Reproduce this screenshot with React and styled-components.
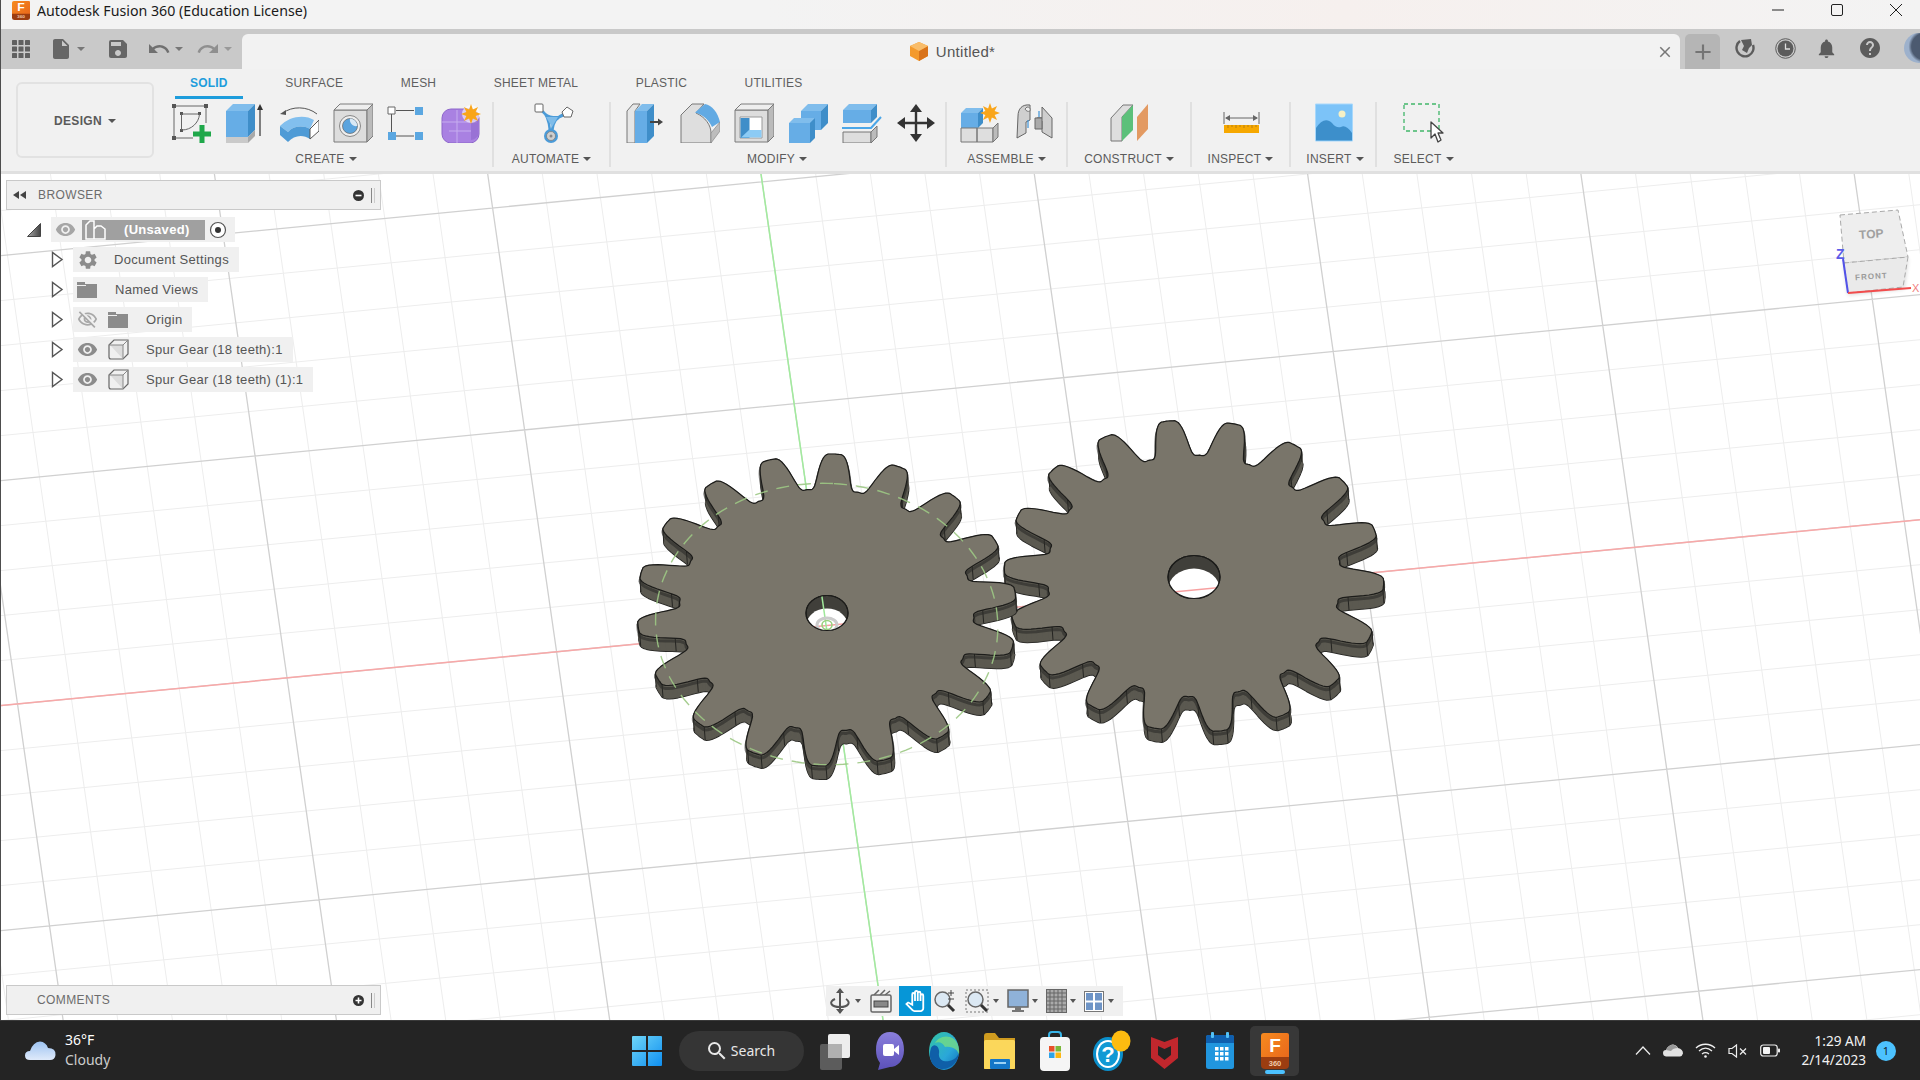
import React from "react";
import styled, { createGlobalStyle } from "styled-components";
import {
  MdInsertDriveFile, MdSave, MdUndo, MdRedo, MdNotifications, MdHelp, MdSettings,
  MdVisibility, MdOutlineVisibilityOff, MdAdd, MdClose, MdOutlinePanTool, MdSearch,
} from "react-icons/md";

const GlobalStyle = createGlobalStyle`
  html, body { margin: 0; padding: 0; width: 1920px; height: 1080px; overflow: hidden; background: #fff; }
  * { box-sizing: border-box; }
  #root { width: 1920px; height: 1080px; font-family: "Liberation Sans", Arial, sans-serif; }
`;

const Page = styled.div`
  display: flex;
  flex-direction: column;
  width: 1920px;
  height: 1080px;
`;
const Window = styled.div`
  flex: 1;
  display: flex;
  flex-direction: column;
  border-left: 1px solid #4d4d4d;
  min-height: 0;
`;

/* title bar */
const TitleBar = styled.div`
  height: 29px;
  display: flex;
  align-items: center;
  padding: 0 18px 9px 11px;
  background: linear-gradient(90deg, #f3f3f3 0%, #f3f3f3 40%, #f6f0ee 70%, #f3f3f3 100%);
`;
const TitleText = styled.span`
  margin-left: 7px;
  font: 14.2px "Noto Sans", sans-serif;
  color: #1a1a1a;
`;
const WinControls = styled.div`
  margin-left: auto;
  display: flex;
  gap: 47px;
  align-items: center;
`;

/* quick access row */
const QatRow = styled.div`
  height: 40px;
  display: flex;
  background: #c9c9c9;
  overflow: hidden;
`;
const QatLeft = styled.div`
  flex: none;
  width: 241px;
  display: flex;
  align-items: center;
  padding: 0 0 0 11px;
`;
const QatSlot = styled.div`
  display: flex;
  margin-left: ${(p) => p.$ml || 0}px;
  color: ${(p) => p.$color || "#666"};
`;
const DocTab = styled.div`
  flex: none;
  width: 1438px;
  height: 35px;
  margin-top: 5px;
  background: #f2f2f2;
  border-radius: 6px 6px 0 0;
  display: grid;
  grid-template-columns: 1fr auto 1fr;
  align-items: center;
  padding: 0 6px 0 0;
`;
const DocTitle = styled.div`
  grid-column: 2;
  display: flex;
  align-items: center;
  gap: 8px;
  margin-right: 11px;
  font-size: 15px;
  letter-spacing: 0.3px;
  color: #555;
`;
const DocClose = styled.div`
  grid-column: 3;
  justify-self: end;
  display: flex;
  color: #777;
`;
const PlusTab = styled.div`
  flex: none;
  width: 35px;
  height: 35px;
  margin: 5px 0 0 5px;
  background: #b5b5b5;
  border-radius: 5px 5px 0 0;
  display: flex;
  align-items: center;
  justify-content: center;
  color: #747474;
`;
const TopIcons = styled.div`
  flex: none;
  display: flex;
  align-items: center;
  gap: 19.5px;
  padding: 0 0 2px 15px;
  color: #5c5c5c;
`;
const Avatar = styled.div`
  flex: none;
  width: 30px;
  height: 30px;
  margin-left: 3px;
  border-radius: 50%;
  background: radial-gradient(circle at 70% 45%, #4c5a70 0 50%, #9db1cc 62%);
`;
const Caret = styled.span`
  display: inline-block;
  width: 0;
  height: 0;
  margin-left: ${(p) => p.$ml ?? 4}px;
  border-left: ${(p) => p.$s || 3.5}px solid transparent;
  border-right: ${(p) => p.$s || 3.5}px solid transparent;
  border-top: ${(p) => (p.$s || 3.5) + 0.5}px solid ${(p) => p.$color || "#555"};
`;
const QatCaret = styled(Caret)`
  align-self: center;
`;

/* ribbon */
const Ribbon = styled.div`
  height: 105px;
  display: flex;
  padding-left: 15px;
  background: #f1f1f1;
  border-bottom: 3px solid #e0e0e0;
`;
const DesignButton = styled.div`
  width: 138px;
  height: 76px;
  margin-top: 13px;
  padding-top: 1px;
  border: 2px solid #e2e2e2;
  border-radius: 6px;
  display: flex;
  align-items: center;
  justify-content: center;
  font-size: 12px;
  font-weight: 700;
  letter-spacing: 0.3px;
  color: #5a5a5a;
`;
const RibbonMain = styled.div`
  margin-left: 9px;
  display: flex;
  flex-direction: column;
`;
const Tabs = styled.div`
  display: flex;
  gap: 27.5px;
  height: 30px;
  padding-left: 12px;
`;
const Tab = styled.div`
  padding: 0 15px;
  height: 30px;
  line-height: 28px;
  font-size: 12px;
  letter-spacing: 0.2px;
  white-space: nowrap;
  font-weight: ${(p) => (p.$active ? 700 : 400)};
  color: ${(p) => (p.$active ? "#1e9ddc" : "#5f5f5f")};
  border-bottom: 3px solid ${(p) => (p.$active ? "#1e9ddc" : "transparent")};
`;
const Groups = styled.div`
  display: flex;
  margin-top: 3px;
`;
const Group = styled.div`
  width: ${(p) => p.$w}px;
  height: 65px;
  padding-top: 1px;
  display: flex;
  flex-direction: column;
  align-items: center;
  border-right: ${(p) => (p.$last ? "none" : "2px solid #e0e0e0")};
`;
const ToolRow = styled.div`
  display: flex;
  gap: ${(p) => p.$gap ?? 14}px;
  height: 40px;
  margin-left: ${(p) => p.$ml || 0}px;
`;
const GroupLabel = styled.div`
  margin-top: 8px;
  margin-left: ${(p) => p.$ml || 0}px;
  line-height: 16px;
  font-size: 12px;
  letter-spacing: 0.25px;
  color: #5b5b5b;
  display: flex;
  align-items: center;
`;

/* viewport */
const Viewport = styled.div`
  position: relative;
  flex: 1;
  background: #fff;
  overflow: hidden;
`;
const SceneSvg = styled.svg`
  position: absolute;
  inset: 0;
`;
const ViewCubeSvg = styled.svg`
  position: absolute;
  left: 1829px;
  top: 30px;
`;
const PanelBar = styled.div`
  width: 375px;
  height: 30px;
  display: flex;
  align-items: center;
  padding: 0 5px 0 6px;
  background: #f0f0f0;
  border: 1px solid #c9c9c9;
  font-size: 12px;
  letter-spacing: 0.4px;
  color: #6c6c6c;
`;
const BrowserPanel = styled.div`
  position: absolute;
  left: 5px;
  top: 6px;
`;
const CommentsPanel = styled.div`
  position: absolute;
  left: 5px;
  bottom: 5px;
`;
const BarTitle = styled.span`
  margin-left: ${(p) => p.$ml}px;
  flex: 1;
`;
const Grip = styled.span`
  width: 4px;
  height: 15px;
  margin-left: 7px;
  border-left: 1px solid #888;
  border-right: 1px solid #ccc;
`;
const Tree = styled.div`
  display: flex;
  flex-direction: column;
  gap: 5px;
  margin-top: 7px;
`;
const TreeRow = styled.div`
  display: flex;
  align-items: center;
  height: 25px;
  padding-left: ${(p) => p.$indent}px;
`;
const TreeItem = styled.div`
  display: flex;
  align-items: center;
  height: 25px;
  margin-left: ${(p) => p.$ml}px;
  padding: 0 ${(p) => p.$pr ?? 10}px 0 4px;
  background: #f0f0f0;
  font-size: 13px;
  letter-spacing: 0.3px;
  color: #555;
  white-space: nowrap;
`;
const TreeLabel = styled.span`
  margin-left: ${(p) => p.$ml ?? 18}px;
`;
const IconGap = styled.span`
  display: flex;
  margin-left: ${(p) => p.$ml ?? 0}px;
  color: ${(p) => p.$color || "#8c8c8c"};
`;
const SelectedName = styled.div`
  display: flex;
  align-items: center;
  width: 123px;
  height: 20px;
  margin-left: 6px;
  padding-left: 3px;
  background: #a0a0a0;
  color: #fff;
  font-weight: 700;
  font-size: 13px;
`;
const NavBar = styled.div`
  position: absolute;
  left: 825px;
  bottom: 4px;
  width: 297px;
  height: 30px;
  background: #f0f0f0;
  display: flex;
  align-items: center;
  padding-left: 3px;
`;
const NavSlot = styled.div`
  display: flex;
  align-items: center;
  justify-content: center;
  height: 30px;
  width: ${(p) => p.$w || 26}px;
  margin-left: ${(p) => p.$ml || 0}px;
  background: ${(p) => (p.$active ? "#0696d7" : "transparent")};
  color: ${(p) => (p.$active ? "#fff" : "#555")};
`;

/* taskbar */
const Taskbar = styled.div`
  height: 60px;
  display: grid;
  grid-template-columns: 1fr auto 1fr;
  align-items: center;
  background: #242424;
  border-top: 1px solid #3a3a3a;
  color: #fff;
  font-family: "Noto Sans", sans-serif;
`;
const Weather = styled.div`
  display: flex;
  align-items: center;
  gap: 9px;
  padding-left: 25px;
`;
const WeatherText = styled.div`
  display: flex;
  flex-direction: column;
  font-size: 14px;
  line-height: 20px;
  margin-top: -1px;
  color: #fff;
  & > span:last-child { color: #ccc; }
`;
const TaskCenter = styled.div`
  display: flex;
  align-items: center;
  padding-left: 3px;
`;
const TaskIcon = styled.div`
  position: relative;
  width: ${(p) => p.$w || 55}px;
  height: 50px;
  margin-left: ${(p) => p.$ml || 0}px;
  display: flex;
  align-items: center;
  justify-content: center;
  border-radius: 5px;
  background: ${(p) => (p.$active ? "#383838" : "transparent")};
`;
const ActiveDot = styled.span`
  position: absolute;
  left: 15px;
  bottom: 2px;
  width: 20px;
  height: 4px;
  border-radius: 2px;
  background: #4cc2ff;
`;
const SearchPill = styled.div`
  width: 125px;
  height: 40px;
  margin: 0 3px 0 9px;
  border-radius: 20px;
  background: #353535;
  display: flex;
  align-items: center;
  justify-content: center;
  gap: 2px;
  padding-right: 3px;
  font-size: 14px;
  color: #e8e8e8;
`;
const Tray = styled.div`
  display: flex;
  align-items: center;
  justify-content: flex-end;
  padding-right: 24px;
`;
const TrayIcons = styled.div`
  display: flex;
  align-items: center;
  gap: 12px;
  margin-right: 21px;
`;
const Clock = styled.div`
  display: flex;
  flex-direction: column;
  align-items: flex-end;
  margin-top: -2px;
  font-size: 13.6px;
  line-height: 19px;
  color: #f2f2f2;
`;
const Badge = styled.div`
  width: 20px;
  height: 20px;
  margin-left: 10px;
  border-radius: 50%;
  background: #4cc2ff;
  color: #10202a;
  font-size: 11px;
  text-align: center;
  line-height: 20px;
`;

/* ---- gears ---- */
const PROFILE = [[0, 1], [2.2, 0.998], [3.2, 0.982], [4.2, 0.945], [5.2, 0.89], [6.1, 0.835], [6.9, 0.797], [7.8, 0.776], [8.6, 0.772], [10, 0.775]];
const profileAt = (d) => {
  for (let i = 1; i < PROFILE.length; i++) {
    if (d <= PROFILE[i][0]) {
      const [d0, r0] = PROFILE[i - 1];
      const [d1, r1] = PROFILE[i];
      return r0 + ((r1 - r0) * (d - d0)) / (d1 - d0);
    }
  }
  return 0.775;
};
const project = (g, r, deg) => {
  const t = (deg * Math.PI) / 180;
  return [
    g.cx + r * (g.ax * Math.cos(t) + g.bx * Math.sin(t)),
    g.cy + r * (g.ay * Math.cos(t) + g.by * Math.sin(t)),
  ];
};
const toPath = (pts, dx = 0, dy = 0) =>
  "M" + pts.map((p) => `${(p[0] + dx).toFixed(1)} ${(p[1] + dy).toFixed(1)}`).join("L") + "Z";

const gearOutline = (g) => {
  const pts = [];
  for (let i = 0; i < 18; i++) {
    for (let d = -10; d < 10; d += 0.5) {
      pts.push(project(g, profileAt(Math.abs(d)), i * 20 + d));
    }
  }
  return pts;
};
const THICK = [1, 13];
const RED_AXIS = { x1: 0, y1: 705.6, x2: 1920, y2: 519.6 };
const GREEN_AXIS = { x1: 760, y1: 174, x2: 882, y2: 1020 };

function Gear({ g, id }) {
  const pts = gearOutline(g);
  const sides = pts
    .map((p, i) => {
      const q = pts[(i + 1) % pts.length];
      return toPath([p, q, [q[0] + THICK[0], q[1] + THICK[1]], [p[0] + THICK[0], p[1] + THICK[1]]]);
    })
    .join("");
  const edges = [];
  for (let i = 0; i < 18; i++) {
    [-6.4, -2.2, 2.2, 6.4].forEach((d) => {
      const p = project(g, profileAt(Math.abs(d)), i * 20 + d);
      edges.push(`M${p[0].toFixed(1)} ${p[1].toFixed(1)}l${THICK[0]} ${THICK[1]}`);
    });
  }
  const h = g.hole;
  return (
    <g>
      <path d={toPath(pts, THICK[0], THICK[1])} fill="#57554e" stroke="#1e1e1c" strokeWidth="2" strokeLinejoin="round" />
      <path d={sides} fill="#5b5950" stroke="#5b5950" strokeWidth="0.5" />
      <path d={edges.join("")} stroke="#1e1e1c" strokeWidth="0.9" fill="none" />
      <path d={toPath(pts, 0, 3)} fill="none" stroke="#2c2b28" strokeWidth="3" opacity="0.6" />
      <path d={toPath(pts)} fill="#79756a" stroke="#1c1c1a" strokeWidth="1.2" strokeLinejoin="round" />
      <clipPath id={id}>
        <ellipse cx={h.x} cy={h.y} rx={h.rx} ry={h.ry} />
      </clipPath>
      <ellipse cx={h.x} cy={h.y} rx={h.rx} ry={h.ry} fill="#403f3a" stroke="#1c1c1a" strokeWidth="1.2" />
      <g clipPath={`url(#${id})`}>
        <ellipse cx={h.x} cy={h.y + 13} rx={h.rx} ry={h.ry} fill="#fff" />
        <line {...RED_AXIS} stroke="#f7a0a0" strokeWidth="1.5" />
        {g.origin && (
          <>
            <line {...GREEN_AXIS} stroke="#9fe89a" strokeWidth="1.5" />
            <ellipse cx="826" cy="625" rx="10" ry="7" fill="none" stroke="#ccc" strokeWidth="3" />
            <ellipse cx="826" cy="625" rx="5" ry="4.5" fill="none" stroke="#9bd07f" strokeWidth="1.6" />
          </>
        )}
      </g>
      <ellipse cx={h.x} cy={h.y} rx={h.rx} ry={h.ry} fill="none" stroke="#1c1c1a" strokeWidth="1.2" />
    </g>
  );
}

const GEAR_A = { cx: 825.7, cy: 610, ax: 8, ay: -156, bx: 190, by: 10, hole: { x: 826, y: 613, rx: 21, ry: 17.5 }, origin: true };
const GEAR_B = { cx: 1193, cy: 576, ax: -26, ay: -155, bx: 188, by: -19, hole: { x: 1193, y: 577, rx: 26, ry: 21.5 } };

function Scene() {
  const minor = [];
  const major = [];
  for (let k = -20; k <= 30; k++) {
    const x0 = 760 + 54.66 * k;
    const d = `M${x0} 174L${x0 + 122} 1020`;
    (k % 5 === 0 ? major : minor).push(d);
  }
  for (let k = -20; k <= 20; k++) {
    const y0 = 705.6 + 45 * k;
    const d = `M0 ${y0}L1920 ${y0 - 186}`;
    (k % 5 === 0 ? major : minor).push(d);
  }
  const pitch = [];
  for (let a = 0; a < 360; a += 2) pitch.push(project(GEAR_A, 0.9, a));
  return (
    <SceneSvg width="1920" height="846" viewBox="0 174 1920 846">
      <path d={minor.join("")} stroke="#ededed" strokeWidth="1" fill="none" />
      <path d={major.join("")} stroke="#d0d0d0" strokeWidth="1.3" fill="none" />
      <line {...RED_AXIS} stroke="#f8a8a8" strokeWidth="1.5" />
      <line {...GREEN_AXIS} stroke="#a2eb9e" strokeWidth="1.5" />
      <Gear g={GEAR_B} id="holeB" />
      <Gear g={GEAR_A} id="holeA" />
      <path d={toPath(pitch, 0, 14)} fill="none" stroke="#9cc884" strokeWidth="1.4" strokeDasharray="13 9" opacity="0.9" />
    </SceneSvg>
  );
}

function ViewCube() {
  return (
    <ViewCubeSvg width="91" height="100" viewBox="1829 204 91 100">
      <defs>
        <filter id="cubeShadow" x="-20%" y="-20%" width="140%" height="140%">
          <feGaussianBlur stdDeviation="2" />
        </filter>
      </defs>
      <path d="M1843 264L1907 258L1903 289L1847 295Z" fill="#000" opacity="0.16" filter="url(#cubeShadow)" />
      <path d="M1839 215L1897 210L1907 257L1843 263Z" fill="#eeeeee" stroke="#aaa" strokeDasharray="5 3" />
      <path d="M1843 263L1907 257L1902 287L1847 293Z" fill="#eaeaea" stroke="#aaa" strokeDasharray="5 3" />
      <text x="1858" y="238" fontFamily="Liberation Sans" fontSize="12" fontWeight="700" fill="#a0a0a0" transform="rotate(-4 1872 234)">TOP</text>
      <text x="1854" y="279" fontFamily="Liberation Sans" fontSize="8" fontWeight="700" letterSpacing="1" fill="#9a9a9a" transform="rotate(-4 1872 275)">FRONT</text>
      <line x1="1842" y1="259" x2="1847" y2="293" stroke="#5252e8" strokeWidth="2" />
      <line x1="1847" y1="293" x2="1910" y2="288" stroke="#f24c4c" strokeWidth="2" />
      <text x="1835" y="259" fontFamily="Liberation Sans" fontSize="14" fontWeight="700" fill="#5c5ce8">Z</text>
      <text x="1911" y="292" fontFamily="Liberation Sans" fontSize="11" fill="#f08080">X</text>
    </ViewCubeSvg>
  );
}

/* ---- ribbon icons ---- */
const Ico = ({ children, w = 40, h = 40 }) => (
  <svg width={w} height={h} viewBox={`0 0 ${w} ${h}`} strokeLinejoin="round">{children}</svg>
);
const Star = ({ x, y, r = 10 }) => {
  const pts = [];
  for (let i = 0; i < 16; i++) {
    const rr = i % 2 ? r * 0.5 : r;
    const a = (i * Math.PI) / 8;
    pts.push(`${(x + rr * Math.cos(a)).toFixed(1)},${(y + rr * Math.sin(a)).toFixed(1)}`);
  }
  return <polygon points={pts.join(" ")} fill="#f9a51a" />;
};
const Cube = ({ x, y, w, h, d, f, t, s, st = "none" }) => (
  <g stroke={st} strokeWidth="1">
    <rect x={x} y={y} width={w} height={h} fill={f} />
    <path d={`M${x} ${y}l${d} ${-d}h${w}l${-d} ${d}Z`} fill={t} />
    <path d={`M${x + w} ${y}l${d} ${-d}v${h}l${-d} ${d}Z`} fill={s} />
  </g>
);
const BLUE = { f: "#66ade6", t: "#80bdec", s: "#3f8ec9" };
const GREY = { f: "#dddddd", t: "#eeeeee", s: "#bbbbbb", st: "#7a7a7a" };

const SketchIcon = () => (
  <Ico>
    <path d="M3 3H35M3 3V35M3 35H22M35 3V20" stroke="#666" fill="none" />
    <path d="M1 1h4v4h-4zM33 1h4v4h-4zM1 33h4v4h-4zM9 9h3v3h-3zM27 9h3v3h-3zM9 26h3v3h-3z" fill="#555" />
    <path d="M11 11H28M10.5 11V27M28.5 11C28 20 20 27 11 27" stroke="#666" fill="none" />
    <path d="M28.5 22h5v6.500h6.500v5h-6.500v6.500h-5v-6.500h-6.500v-5h6.500z" fill="#1fa84a" />
  </Ico>
);
const ExtrudeIcon = () => (
  <Ico>
    <Cube x={1} y={8} w={22} h={26} d={7} {...BLUE} />
    <rect x="1" y="34" width="22" height="6" fill="#cacaca" />
    <path d="M23 34l7-7v6l-7 7z" fill="#a9a9a9" />
    <path d="M35 33V5" stroke="#333" strokeWidth="1.2" />
    <path d="M35 1l-3 6h6z" fill="#333" />
  </Ico>
);
const RevolveIcon = () => (
  <Ico>
    <path d="M4 10C13 3 28 3 38 11" stroke="#555" fill="none" />
    <path d="M1 11l6-4v5z" fill="#555" />
    <path d="M1 23C10 13 26 11 35 17L31 26C24 22 14 23 9 29Z" fill="#82bfee" />
    <path d="M1 23L9 29C14 23 24 22 31 26V36C24 31 15 32 9 39L1 32Z" fill="#4f9bd6" />
    <path d="M31 26L40 17V28L31 36Z" fill="#fff" stroke="#555" />
  </Ico>
);
const HoleIcon = () => (
  <Ico>
    <Cube x={1} y={7} w={33} h={32} d={6} {...GREY} />
    <circle cx="17" cy="23" r="10.500" fill="#eee" stroke="#888" />
    <circle cx="17" cy="23" r="7.500" fill="#5ba4de" stroke="#666" strokeWidth="0.7" />
    <path d="M17 15.600C16 20 20 24 24.300 23C24 19 21 16 17 15.600Z" fill="#d8e8f5" />
  </Ico>
);
const PatternIcon = () => (
  <Ico>
    <path d="M9 7.500H27M4.500 11V29M9 33H27" stroke="#555" fill="none" />
    <rect x="1" y="4" width="7" height="7" fill="#fff" stroke="#666" />
    <rect x="28" y="4" width="8" height="8" fill="#5ba7e1" />
    <rect x="1" y="29" width="8" height="8" fill="#5ba7e1" />
    <rect x="28" y="29" width="8" height="8" fill="#5ba7e1" />
  </Ico>
);
const FormIcon = () => (
  <Ico>
    <rect x="1" y="6" width="37" height="34" rx="9" fill="#a981e2" stroke="#8d66ca" />
    <path d="M1 19H36M16 7V40M8 28H30" stroke="#c6adef" fill="none" />
    <path d="M30 15h7v18c-3 3-5 4-7 4z" fill="#8f69cd" opacity="0.6" />
    <circle cx="30" cy="11" r="9" fill="#fff" opacity="0.6" />
    <Star x={30} y={11} r={10} />
  </Ico>
);
const AutomateIcon = () => (
  <Ico>
    <path d="M7 7C12 10 15 16 16 28M31 11C24 13 19 18 18 28M9 9C14 15 24 16 30 12" stroke="#4b9bd8" strokeWidth="2.600" fill="none" />
    <path d="M12 14L24 14L18 24Z" fill="#7fbce9" />
    <rect x="1" y="1" width="8" height="8" rx="1" fill="#fff" stroke="#666" />
    <path d="M33 4l6 4-2 6h-7l-2-5z" fill="#fff" stroke="#666" />
    <circle cx="17" cy="33" r="7" fill="#4b9bd8" />
    <circle cx="17" cy="33" r="4.500" fill="#cfcfcf" stroke="#777" strokeWidth="0.7" />
    <circle cx="17" cy="33" r="1.500" fill="#888" />
  </Ico>
);
const PressPullIcon = () => (
  <Ico>
    <path d="M1 8L7 1H14L9 8V40H1Z" fill="#e6e6e6" stroke="#777" />
    <Cube x={9} y={8} w={12} h={32} d={7} {...BLUE} />
    <rect x="24" y="18" width="9" height="2" fill="#444" />
    <path d="M32 15.500l5 3.500-5 3.500z" fill="#444" />
  </Ico>
);
const FilletIcon = () => (
  <Ico>
    <path d="M1 12L12 1H24L16 10C25 14 31 22 31 30V40H1Z" fill="#dedede" stroke="#777" />
    <path d="M15 9.500L25 1C32 2 38 10 40 19L32 24C29 17 23 12 15 9.500Z" fill="#62aae3" />
    <path d="M31 30L40 19V28L31 40Z" fill="#bdbdbd" stroke="#888" strokeWidth="0.7" />
  </Ico>
);
const ShellIcon = () => (
  <Ico>
    <Cube x={1} y={7} w={33} h={32} d={6} {...GREY} />
    <rect x="6" y="14" width="22" height="21" fill="#fff" stroke="#999" />
    <rect x="6.500" y="15" width="9" height="20" fill="#3f8ec9" />
    <path d="M15 27H27.500V34.500H7Z" fill="#8ccbf5" />
  </Ico>
);
const CombineIcon = () => (
  <Ico>
    <Cube x={13} y={8} w={20} h={19} d={7} {...BLUE} />
    <Cube x={1} y={20} w={21} h={20} d={5} {...BLUE} />
  </Ico>
);
const SplitIcon = () => (
  <Ico>
    <Cube x={1} y={7} w={28} h={13} d={6} {...BLUE} />
    <path d="M-1 25H29L39 14" stroke="#4ba6e8" strokeWidth="2" fill="none" />
    <path d="M1 29H29V40H1Z" fill="#dedede" stroke="#777" />
    <path d="M29 29L35 23V34L29 40Z" fill="#bbb" stroke="#777" />
  </Ico>
);
const MoveIcon = () => (
  <Ico>
    <path d="M20 6V34M6 20H34" stroke="#333" strokeWidth="2.400" />
    <path d="M20 1l6 8h-12zM20 39l6-8h-12zM1 20l8-6v12zM39 20l-8-6v12z" fill="#333" />
  </Ico>
);
const NewComponentIcon = () => (
  <Ico>
    <Cube x={1} y={10} w={17} h={15} d={5} {...BLUE} />
    <path d="M1 25H17V39H1ZM17 25H33V39H17Z" fill="#dedede" stroke="#777" />
    <path d="M33 25l5-5v14l-5 5z" fill="#bbb" stroke="#777" />
    <Star x={30} y={10} r={10} />
  </Ico>
);
const JointIcon = () => (
  <Ico>
    <path d="M1 35L2 13C2 6 6 1 14 2V17L10 19V30Z" fill="#cfcfcf" stroke="#666" />
    <path d="M11 4C13 4 15 5 14 8C12 9 10 8 9 6Z" fill="#eee" stroke="#777" />
    <path d="M26 4L36 15V35L26 29V18L20 16C20 15 22 14 26 15Z" fill="#cfcfcf" stroke="#666" />
    <rect x="19" y="15" width="7" height="11" fill="#aaa" stroke="#666" />
    <path d="M12 17V25M23 8V14" stroke="#3f93d8" strokeWidth="1.200" />
  </Ico>
);
const ConstructIcon = () => (
  <Ico>
    <path d="M1 15L13 2H23L12 14V38H1Z" fill="#dedede" stroke="#777" />
    <path d="M12 14L23 2V27L12 38Z" fill="#5cc07a" />
    <path d="M27 14L38 1V26L27 38Z" fill="#e39a62" />
  </Ico>
);
const InspectIcon = () => (
  <Ico>
    <path d="M3 9V21M38 9V21M5 15H36" stroke="#666" fill="none" />
    <path d="M4 15l5-3v6zM37 15l-5-3v6z" fill="#666" />
    <rect x="3" y="22" width="35" height="8" fill="#f6a800" />
    <path d="M7 22v3M11 22v2M15 22v3M19 22v2M23 22v3M27 22v2M31 22v3M35 22v2" stroke="#b97f10" fill="none" />
  </Ico>
);
const InsertIcon = () => (
  <Ico>
    <rect x="0.500" y="1" width="37" height="37" fill="#7cc3f8" stroke="#a8d8fb" />
    <circle cx="27" cy="11" r="3.500" fill="#f5f0c5" />
    <path d="M1 37.500V25C6 17 12 15 17 20C20 24 23 25 26 24C29 22 33 24 37 30V37.500Z" fill="#3d8fcb" />
  </Ico>
);
const SelectIcon = () => (
  <Ico w={42} h={42}>
    <rect x="1" y="1" width="35" height="27" fill="none" stroke="#41b66a" strokeWidth="1.300" strokeDasharray="4 3" />
    <path d="M28 19L28 35L32 31L35 39L38 37L35 30L40 30Z" fill="#fff" stroke="#444" strokeWidth="1.300" />
  </Ico>
);

/* ---- tree / small icons ---- */
const FolderIcon = () => (
  <svg width="20" height="16" viewBox="0 0 20 16">
    <path d="M0 0H8V2H20V16H0Z" fill="#8c8c8c" />
    <path d="M0 3H9V4H0Z" fill="#f0f0f0" />
  </svg>
);
const BodyIcon = () => (
  <svg width="21" height="21" viewBox="0 0 21 21">
    <path d="M1 6L6 1H20V15L15 20H3Q1 20 1 18Z" fill="#f0f0f0" stroke="#666" strokeWidth="1.200" />
    <path d="M2 6H15V20" fill="#dcdcdc" stroke="none" />
    <path d="M15 6L20 1M1 6H15V20" stroke="#888" fill="none" />
  </svg>
);
const ExpandArrow = () => (
  <svg width="13" height="17" viewBox="0 0 13 17" style={{ display: "block" }}>
    <path d="M1.500 1.500V15.500L11 8.500Z" fill="#fff" stroke="#555" strokeWidth="1.400" />
  </svg>
);
const RootTriangle = () => (
  <svg width="14" height="14" viewBox="0 0 14 14">
    <defs>
      <linearGradient id="rootTri" x1="0" y1="0" x2="1" y2="0">
        <stop offset="0" stopColor="#aaa" />
        <stop offset="1" stopColor="#444" />
      </linearGradient>
    </defs>
    <path d="M0.500 13.500L13.500 0.500V13.500Z" fill="url(#rootTri)" stroke="#444" />
  </svg>
);
const ComponentMini = () => (
  <svg width="21" height="20" viewBox="0 0 21 20">
    <path d="M1 5L5 1H9V19H1Z M9 9L12 6H16L20 9V19H9Z" fill="#a0a0a0" stroke="#fff" strokeWidth="1.500" />
  </svg>
);
const RadioDot = () => (
  <svg width="18" height="18" viewBox="0 0 18 18">
    <circle cx="9" cy="9" r="7.500" fill="#fff" stroke="#555" strokeWidth="1.200" />
    <circle cx="9" cy="9" r="3" fill="#333" />
  </svg>
);
const RoundGlyph = ({ plus }) => (
  <svg width="11" height="11" viewBox="0 0 11 11">
    <circle cx="5.500" cy="5.500" r="5.500" fill="#333" />
    <path d={plus ? "M2.500 5.500h6M5.500 2.500v6" : "M2.500 5.500h6"} stroke="#fff" strokeWidth="1.600" />
  </svg>
);
const DoubleLeft = () => (
  <svg width="13" height="8" viewBox="0 0 13 8">
    <path d="M0 4l6-4v8zM7 4l6-4v8z" fill="#444" />
  </svg>
);
const AppGrid = () => (
  <svg width="18" height="18" viewBox="0 0 18 18" fill="#606060">
    {[0, 6.500, 13].map((x) => [0, 6.500, 13].map((y) => <rect key={`${x}-${y}`} x={x} y={y} width="5" height="5" rx="0.600" />))}
  </svg>
);
const OrangeCube = () => (
  <svg width="18" height="19" viewBox="0 0 18 19">
    <path d="M9 0L18 4V14L9 19L0 14V4Z" fill="#f49a2c" />
    <path d="M9 9L18 4V14L9 19Z" fill="#d9731a" />
    <path d="M9 0L18 4L9 9L0 4Z" fill="#f9bd6a" />
  </svg>
);
const SyncDial = () => (
  <svg width="20" height="20" viewBox="0 0 20 20" fill="none">
    <path d="M5 3A8.500 8.500 0 1 0 18 7" stroke="#5c5c5c" strokeWidth="2.400" />
    <path d="M6 2L16 1L17 7L14 10L12 15L7 12L9 8Z" fill="#5c5c5c" />
  </svg>
);
const JobClock = () => (
  <svg width="21" height="21" viewBox="0 0 21 21" fill="none">
    <circle cx="10.500" cy="10.500" r="9.800" stroke="#5c5c5c" />
    <circle cx="10.500" cy="10.500" r="8" fill="#5c5c5c" />
    <path d="M10.500 5.500V11H15" stroke="#ddd" strokeWidth="1.300" />
  </svg>
);

/* ---- nav bar icons ---- */
const OrbitIcon = () => (
  <svg width="22" height="26" viewBox="0 0 22 26" fill="none">
    <path d="M11 1V25" stroke="#555" strokeWidth="2" />
    <path d="M11 0l4 5H7zM11 26l-4-5h8z" fill="#555" />
    <path d="M6 11C-1 14 2 19 11 19C20 19 22 14 17 11" stroke="#555" strokeWidth="2" />
  </svg>
);
const LookIcon = () => (
  <svg width="22" height="24" viewBox="0 0 22 24" fill="none">
    <path d="M4 6L9 1M10 6L15 1M15 6L20 2" stroke="#666" strokeWidth="1.500" />
    <rect x="1" y="6" width="20" height="17" rx="1.500" fill="#eee" stroke="#666" strokeWidth="1.500" />
    <rect x="4" y="12" width="14" height="6" fill="#888" stroke="#444" />
  </svg>
);
const ZoomIcon = ({ size = 24, dashed, pm }) => (
  <svg width={size} height={size} viewBox="0 0 24 24" fill="none">
    {dashed && <rect x="1" y="1" width="22" height="22" stroke="#777" strokeDasharray="2 2" />}
    <circle cx="10.500" cy="10.500" r="7.500" fill="#dbe8f3" stroke="#666" strokeWidth="1.500" />
    <path d="M16 16L22 22" stroke="#333" strokeWidth="3" />
    {pm && <path d="M19 1v6M16 4h6M16 10h6" stroke="#444" />}
  </svg>
);
const DisplayIcon = () => (
  <svg width="22" height="24" viewBox="0 0 22 24">
    <rect x="1" y="1" width="20" height="17" fill="#8fb2d9" stroke="#666" strokeWidth="1.500" />
    <path d="M8 18h6v3h3v2H5v-2h3z" fill="#777" />
  </svg>
);
const GridIcon = () => (
  <svg width="21" height="24" viewBox="0 0 21 24">
    <rect x="0.500" y="0.500" width="20" height="23" fill="#aaa" stroke="#666" />
    <path d="M4 0V24M8 0V24M12 0V24M16 0V24M0 4H21M0 8H21M0 12H21M0 16H21M0 20H21" stroke="#666" strokeWidth="1" />
  </svg>
);
const ViewsIcon = () => (
  <svg width="20" height="21" viewBox="0 0 20 21">
    <rect x="0.500" y="0.500" width="19" height="20" fill="#fff" stroke="#777" />
    <rect x="2" y="2" width="7" height="7.500" fill="#6e94c6" />
    <rect x="11" y="2" width="7" height="7.500" fill="#6e94c6" />
    <rect x="2" y="11.500" width="7" height="7.500" fill="#6e94c6" />
    <rect x="11" y="11.500" width="7" height="7.500" fill="#6e94c6" />
  </svg>
);

/* ---- taskbar icons ---- */
const FusionLogo = ({ w, h, big }) => (
  <svg width={w} height={h} viewBox="0 0 28 36" preserveAspectRatio="none">
    <defs>
      <linearGradient id={big ? "fuA" : "fuB"} x1="0" y1="0" x2="1" y2="1">
        <stop offset="0" stopColor="#f68a1f" />
        <stop offset="1" stopColor="#e8641b" />
      </linearGradient>
    </defs>
    <path d="M3 0H26Q28 0 28 2V30L25 33H3Q0 33 0 30V3Q0 0 3 0Z" fill={`url(#${big ? "fuA" : "fuB"})`} />
    <path d="M0 24H28V32Q28 36 24 36H4Q0 36 0 32Z" fill="#9c3d10" />
    <text x="14" y="19" textAnchor="middle" fontFamily="Liberation Sans" fontWeight="700" fontSize="19" fill="#fff">F</text>
    <text x="14" y="33" textAnchor="middle" fontFamily="Liberation Sans" fontWeight="700" fontSize="7.500" fill="#f0c8a8">360</text>
  </svg>
);
const WinLogo = () => (
  <svg width="30" height="30" viewBox="0 0 30 30">
    <defs>
      <linearGradient id="winG" x1="0" y1="0" x2="1" y2="1">
        <stop offset="0" stopColor="#6fd6f8" />
        <stop offset="1" stopColor="#0f8ff0" />
      </linearGradient>
    </defs>
    <path d="M1 0H14V14H0V1Q0 0 1 0ZM16 0H29Q30 0 30 1V14H16ZM0 16H14V30H1Q0 30 0 29ZM16 16H30V29Q30 30 29 30H16Z" fill="url(#winG)" />
  </svg>
);
const TaskView = () => (
  <svg width="30" height="38" viewBox="0 0 30 38">
    <rect x="8" y="2" width="22" height="24" rx="2" fill="#ededed" />
    <rect x="0" y="12" width="22" height="26" rx="2" fill="#5c5c5c" />
    <rect x="8" y="12" width="14" height="14" fill="#b0b0b0" />
  </svg>
);
const ChatIcon = () => (
  <svg width="30" height="40" viewBox="0 0 30 40">
    <defs>
      <linearGradient id="chatG" x1="0" y1="0" x2="0" y2="1">
        <stop offset="0" stopColor="#8a7fdc" />
        <stop offset="1" stopColor="#5b50b8" />
      </linearGradient>
    </defs>
    <path d="M15 1C24 1 29 8 29 19C29 30 22 36 15 36L3 39L5 32C2 28 1 24 1 19C1 8 6 1 15 1Z" fill="url(#chatG)" />
    <rect x="8" y="13" width="11" height="12" rx="2" fill="#fff" />
    <path d="M19 18l5-4v10l-5-4z" fill="#fff" />
  </svg>
);
const EdgeIcon = () => (
  <svg width="31" height="40" viewBox="0 0 31 40">
    <defs>
      <linearGradient id="edgeA" x1="0" y1="0" x2="1" y2="1">
        <stop offset="0" stopColor="#34c6a4" />
        <stop offset="0.6" stopColor="#2aa7d9" />
        <stop offset="1" stopColor="#0d6db8" />
      </linearGradient>
    </defs>
    <ellipse cx="15" cy="20" rx="15" ry="19" fill="url(#edgeA)" />
    <path d="M30 21C30 30 22 39 12 38C2 36-1 26 2 17C5 11 11 16 10 22C9 29 15 31 20 30C26 29 29 25 30 21Z" fill="#0f5fa8" />
    <path d="M16 16C24 15 29 19 30 24C31 16 28 8 21 6C14 4 8 8 6 12C10 10 14 12 16 16Z" fill="#7ee27a" opacity="0.7" />
  </svg>
);
const FolderTask = () => (
  <svg width="31" height="36" viewBox="0 0 31 36">
    <path d="M0 3Q0 0 3 0H11L15 5H31V36H0Z" fill="#cf9b1f" />
    <rect x="0" y="7" width="31" height="29" rx="1.500" fill="#fbd75b" />
    <rect x="6" y="26" width="20" height="10" rx="1" fill="#1476c8" />
    <rect x="10" y="29" width="12" height="2" fill="#9cd2f6" />
  </svg>
);
const StoreIcon = () => (
  <svg width="30" height="40" viewBox="0 0 30 40" fill="none">
    <path d="M9 8V4Q9 1 12 1H18Q21 1 21 4V8" stroke="#37b4e8" strokeWidth="2" />
    <rect x="0" y="6" width="30" height="34" rx="4" fill="#f5f5f5" />
    <rect x="9" y="15" width="5.500" height="5.500" fill="#e8502a" />
    <rect x="15.500" y="15" width="5.500" height="5.500" fill="#7bb83a" />
    <rect x="9" y="21.500" width="5.500" height="5.500" fill="#2ea3e8" />
    <rect x="15.500" y="21.500" width="5.500" height="5.500" fill="#fdb713" />
  </svg>
);
const HelpTask = () => (
  <svg width="42" height="42" viewBox="-4 0 42 42">
    <ellipse cx="15" cy="24" rx="15" ry="17" fill="#0b8fcb" />
    <ellipse cx="15" cy="24" rx="12" ry="14" fill="#fff" />
    <ellipse cx="15" cy="24" rx="10" ry="12" fill="#1199d4" />
    <text x="15" y="32" textAnchor="middle" fontFamily="Liberation Sans" fontWeight="700" fontSize="22" fill="#fff">?</text>
    <ellipse cx="28" cy="11" rx="9.500" ry="10.500" fill="#fdbb10" />
  </svg>
);
const McAfeeIcon = () => (
  <svg width="27" height="36" viewBox="0 0 27 36">
    <path d="M0 4L13.500 9L27 4V25L13.500 36L0 25Z" fill="#c1272d" />
    <path d="M7 13L13.500 16L20 13V22L13.500 27L7 22Z" fill="#242424" />
  </svg>
);
const CalendarIcon = () => (
  <svg width="28" height="37" viewBox="0 0 28 37">
    <rect x="0" y="3" width="28" height="34" rx="2.500" fill="#2196de" />
    <path d="M0 5Q0 3 2 3H26Q28 3 28 5V11H0Z" fill="#0f5fae" />
    <rect x="5" y="0" width="3" height="6" rx="1" fill="#53c0f5" />
    <rect x="20" y="0" width="3" height="6" rx="1" fill="#53c0f5" />
    {[9, 14, 19].map((x) => [15, 20, 25].map((y) => <rect key={`${x}-${y}`} x={x} y={y} width="3.500" height="3.500" fill="#fff" />))}
  </svg>
);
const WeatherCloud = () => (
  <svg width="31" height="20" viewBox="0 0 31 20">
    <defs>
      <linearGradient id="cloudG" x1="0" y1="0" x2="0" y2="1">
        <stop offset="0" stopColor="#9dc3f2" />
        <stop offset="1" stopColor="#dfeafa" />
      </linearGradient>
    </defs>
    <path d="M5 19Q0 19 0 14.500Q0 10 5 10Q8 1 15 0.500Q21 1 23 7Q31 7 30.500 14Q30 19 25 19Z" fill="url(#cloudG)" />
  </svg>
);
const Chevron = () => (
  <svg width="16" height="9" viewBox="0 0 16 9"><path d="M1 8.500L8 1L15 8.500" stroke="#eee" fill="none" strokeWidth="1.200" /></svg>
);
const OneDrive = () => (
  <svg width="20" height="13" viewBox="0 0 20 13">
    <path d="M3 12.500Q0 12 0 9Q0 6 3 6Q5 1 10 0.500Q14 1 15 4Q20 5 20 9.500Q19 12.500 17 12.500Z" fill="#e2e2e2" />
    <path d="M3 6Q5 1 10 0.500Q13 1 15 4Q10 4 8 7Z" fill="#9a9a9a" />
  </svg>
);
const Wifi = () => (
  <svg width="21" height="15" viewBox="0 0 21 15" fill="none" stroke="#f0f0f0" strokeWidth="1.300">
    <path d="M1 5C6 0 15 0 20 5M4 8C8 4.500 13 4.500 17 8M7 11C9 9.500 12 9.500 14 11" />
    <circle cx="10.500" cy="13.500" r="1.300" fill="#f0f0f0" stroke="none" />
  </svg>
);
const MuteIcon = () => (
  <svg width="20" height="14" viewBox="0 0 20 14" fill="none" stroke="#eee" strokeWidth="1.200">
    <path d="M1 4.500H4L8.500 1V13L4 9.500H1Z" />
    <path d="M12 4.500L18 10.500M18 4.500L12 10.500" />
  </svg>
);
const Battery = () => (
  <svg width="20" height="13" viewBox="0 0 20 13" fill="none">
    <rect x="0.700" y="1" width="16.500" height="11" rx="2.500" stroke="#eee" strokeWidth="1.200" />
    <rect x="3" y="3" width="7" height="7" rx="1" fill="#f5f5f5" />
    <rect x="18" y="4.500" width="2" height="4" rx="0.800" fill="#eee" />
  </svg>
);

export default function App() {
  return (
    <Page>
      <GlobalStyle />
      <Window>
        <TitleBar>
          <FusionLogo w={18} h={19} />
          <TitleText>Autodesk Fusion 360 (Education License)</TitleText>
          <WinControls>
            <svg width="12" height="12" viewBox="0 0 12 12"><path d="M0 6H12" stroke="#222" /></svg>
            <svg width="12" height="12" viewBox="0 0 12 12"><rect x="0.500" y="0.500" width="11" height="11" rx="1.500" fill="none" stroke="#222" /></svg>
            <svg width="12" height="12" viewBox="0 0 12 12"><path d="M0 0L12 12M12 0L0 12" stroke="#222" /></svg>
          </WinControls>
        </TitleBar>

        <QatRow>
          <QatLeft>
            <AppGrid />
            <QatSlot $ml={19}><MdInsertDriveFile size={24} /></QatSlot>
            <QatCaret $ml={4} $s={4} $color="#777" />
            <QatSlot $ml={21}><MdSave size={24} /></QatSlot>
            <QatSlot $ml={17} $color="#707070"><MdUndo size={24} /></QatSlot>
            <QatCaret $ml={4} $s={4} $color="#777" />
            <QatSlot $ml={13} $color="#8f8f8f"><MdRedo size={24} /></QatSlot>
            <QatCaret $ml={4} $s={4} $color="#999" />
          </QatLeft>
          <DocTab>
            <DocTitle><OrangeCube />Untitled*</DocTitle>
            <DocClose><MdClose size={18} /></DocClose>
          </DocTab>
          <PlusTab><MdAdd size={26} /></PlusTab>
          <TopIcons>
            <SyncDial />
            <JobClock />
            <MdNotifications size={23} />
            <MdHelp size={24} />
            <Avatar />
          </TopIcons>
        </QatRow>

        <Ribbon>
          <DesignButton>DESIGN<Caret $ml={6} $s={4} /></DesignButton>
          <RibbonMain>
            <Tabs>
              <Tab $active>SOLID</Tab>
              <Tab>SURFACE</Tab>
              <Tab>MESH</Tab>
              <Tab>SHEET METAL</Tab>
              <Tab>PLASTIC</Tab>
              <Tab>UTILITIES</Tab>
            </Tabs>
            <Groups>
              <Group $w={331}>
                <ToolRow $ml={-3}>
                  <SketchIcon /><ExtrudeIcon /><RevolveIcon /><HoleIcon /><PatternIcon /><FormIcon />
                </ToolRow>
                <GroupLabel $ml={-3}>CREATE<Caret $s={4} /></GroupLabel>
              </Group>
              <Group $w={117}>
                <ToolRow $ml={4}><AutomateIcon /></ToolRow>
                <GroupLabel>AUTOMATE<Caret $s={4} /></GroupLabel>
              </Group>
              <Group $w={336}>
                <ToolRow $ml={5}>
                  <PressPullIcon /><FilletIcon /><ShellIcon /><CombineIcon /><SplitIcon /><MoveIcon />
                </ToolRow>
                <GroupLabel $ml={-2}>MODIFY<Caret $s={4} /></GroupLabel>
              </Group>
              <Group $w={121}>
                <ToolRow $gap={16} $ml={2}><NewComponentIcon /><JointIcon /></ToolRow>
                <GroupLabel>ASSEMBLE<Caret $s={4} /></GroupLabel>
              </Group>
              <Group $w={124}>
                <ToolRow $ml={2}><ConstructIcon /></ToolRow>
                <GroupLabel>CONSTRUCT<Caret $s={4} /></GroupLabel>
              </Group>
              <Group $w={99}>
                <ToolRow><InspectIcon /></ToolRow>
                <GroupLabel>INSPECT<Caret $s={4} /></GroupLabel>
              </Group>
              <Group $w={86}>
                <ToolRow $ml={4}><InsertIcon /></ToolRow>
                <GroupLabel $ml={4}>INSERT<Caret $s={4} /></GroupLabel>
              </Group>
              <Group $w={93} $last>
                <ToolRow><SelectIcon /></ToolRow>
                <GroupLabel>SELECT<Caret $s={4} /></GroupLabel>
              </Group>
            </Groups>
          </RibbonMain>
        </Ribbon>

        <Viewport>
          <Scene />
          <ViewCube />
          <BrowserPanel>
            <PanelBar>
              <DoubleLeft />
              <BarTitle $ml={12}>BROWSER</BarTitle>
              <RoundGlyph />
              <Grip />
            </PanelBar>
            <Tree>
              <TreeRow $indent={21}>
                <RootTriangle />
                <TreeItem $ml={10} $pr={8}>
                  <IconGap $color="#a6a6a6"><MdVisibility size={21} /></IconGap>
                  <SelectedName>
                    <ComponentMini />
                    <TreeLabel>(Unsaved)</TreeLabel>
                  </SelectedName>
                  <IconGap $ml={4}><RadioDot /></IconGap>
                </TreeItem>
              </TreeRow>
              <TreeRow $indent={45}>
                <ExpandArrow />
                <TreeItem $ml={9}>
                  <MdSettings size={22} color="#8c8c8c" />
                  <TreeLabel $ml={15}>Document Settings</TreeLabel>
                </TreeItem>
              </TreeRow>
              <TreeRow $indent={45}>
                <ExpandArrow />
                <TreeItem $ml={9}>
                  <FolderIcon />
                  <TreeLabel>Named Views</TreeLabel>
                </TreeItem>
              </TreeRow>
              <TreeRow $indent={45}>
                <ExpandArrow />
                <TreeItem $ml={9}>
                  <IconGap $color="#a8a8a8"><MdOutlineVisibilityOff size={21} /></IconGap>
                  <IconGap $ml={10}><FolderIcon /></IconGap>
                  <TreeLabel>Origin</TreeLabel>
                </TreeItem>
              </TreeRow>
              <TreeRow $indent={45}>
                <ExpandArrow />
                <TreeItem $ml={9}>
                  <IconGap><MdVisibility size={21} /></IconGap>
                  <IconGap $ml={10}><BodyIcon /></IconGap>
                  <TreeLabel $ml={17}>Spur Gear (18 teeth):1</TreeLabel>
                </TreeItem>
              </TreeRow>
              <TreeRow $indent={45}>
                <ExpandArrow />
                <TreeItem $ml={9}>
                  <IconGap><MdVisibility size={21} /></IconGap>
                  <IconGap $ml={10}><BodyIcon /></IconGap>
                  <TreeLabel $ml={17}>Spur Gear (18 teeth) (1):1</TreeLabel>
                </TreeItem>
              </TreeRow>
            </Tree>
          </BrowserPanel>
          <CommentsPanel>
            <PanelBar>
              <BarTitle $ml={24}>COMMENTS</BarTitle>
              <RoundGlyph plus />
              <Grip />
            </PanelBar>
          </CommentsPanel>
          <NavBar>
            <NavSlot $w={22}><OrbitIcon /></NavSlot>
            <NavSlot $w={14}><Caret $ml={0} /></NavSlot>
            <NavSlot $w={24} $ml={4}><LookIcon /></NavSlot>
            <NavSlot $w={32} $ml={6} $active><MdOutlinePanTool size={22} /></NavSlot>
            <NavSlot $w={26}><ZoomIcon pm /></NavSlot>
            <NavSlot $w={26} $ml={7}><ZoomIcon dashed /></NavSlot>
            <NavSlot $w={12}><Caret $ml={0} /></NavSlot>
            <NavSlot $w={24} $ml={4}><DisplayIcon /></NavSlot>
            <NavSlot $w={10}><Caret $ml={0} /></NavSlot>
            <NavSlot $w={24} $ml={4}><GridIcon /></NavSlot>
            <NavSlot $w={10}><Caret $ml={0} /></NavSlot>
            <NavSlot $w={22} $ml={5}><ViewsIcon /></NavSlot>
            <NavSlot $w={12}><Caret $ml={0} /></NavSlot>
          </NavBar>
        </Viewport>
      </Window>

      <Taskbar>
        <Weather>
          <WeatherCloud />
          <WeatherText>
            <span>36°F</span>
            <span>Cloudy</span>
          </WeatherText>
        </Weather>
        <TaskCenter>
          <TaskIcon $w={46}><WinLogo /></TaskIcon>
          <SearchPill><MdSearch size={24} />Search</SearchPill>
          <TaskIcon><TaskView /></TaskIcon>
          <TaskIcon><ChatIcon /></TaskIcon>
          <TaskIcon><EdgeIcon /></TaskIcon>
          <TaskIcon><FolderTask /></TaskIcon>
          <TaskIcon><StoreIcon /></TaskIcon>
          <TaskIcon><HelpTask /></TaskIcon>
          <TaskIcon><McAfeeIcon /></TaskIcon>
          <TaskIcon><CalendarIcon /></TaskIcon>
          <TaskIcon $w={49} $ml={3} $active>
            <FusionLogo w={28} h={36} big />
            <ActiveDot />
          </TaskIcon>
        </TaskCenter>
        <Tray>
          <TrayIcons>
            <Chevron />
            <OneDrive />
            <Wifi />
            <MuteIcon />
            <Battery />
          </TrayIcons>
          <Clock>
            <span>1:29 AM</span>
            <span>2/14/2023</span>
          </Clock>
          <Badge>1</Badge>
        </Tray>
      </Taskbar>
    </Page>
  );
}
